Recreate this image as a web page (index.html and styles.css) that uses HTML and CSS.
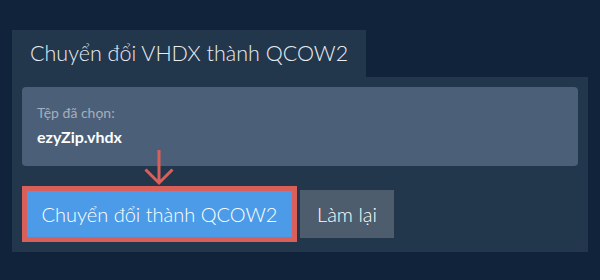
FILE: index.html
```html
<!DOCTYPE html>
<html lang="vi">
<head>
    <meta charset="UTF-8">
    <meta name="viewport" content="width=device-width, initial-scale=1.0">
    <title>Chuyển đổi VHDX thành QCOW2</title>
    <link rel="stylesheet" href="styles.css">
</head>
<body>
    <div class="converter">
        <div class="tab">Chuyển đổi VHDX thành QCOW2</div>
        <div class="panel">
            <div class="file-box">
                <div class="file-label">Tệp đã chọn:</div>
                <div class="file-name">ezyZip.vhdx</div>
            </div>
            <svg class="pointer" width="30" height="38" viewBox="0 0 30 38">
                <path d="M15 1 V34 M1.5 20.5 L15 34 L28.5 20.5" fill="none" stroke="#d9605a" stroke-width="3"/>
            </svg>
            <div class="actions">
                <button class="convert">Chuyển đổi thành QCOW2</button>
                <button class="reset">Làm lại</button>
            </div>
        </div>
    </div>
</body>
</html>
```

FILE: styles.css
```css
body {
    font-family: Lato, "Open Sans", sans-serif;
    background-color: #11233a;
    margin: 0px;
    padding: 30px 12px;
}
.converter {
    width: 576px;
}
.tab {
    display: inline-block;
    background-color: #22364c;
    color: #e8edf2;
    font-size: 21.5px;
    font-weight: 300;
    height: 47px;
    line-height: 47px;
    padding: 0 18px;
    box-sizing: border-box;
}
.panel {
    position: relative;
    background-color: #22364c;
    padding: 10px 10px 10px 10px;
}
.file-box {
    background-color: #4b6078;
    border-radius: 4px;
    padding: 17px 15px 0 15px;
    height: 79px;
    box-sizing: border-box;
}
.file-label {
    color: #a3afbd;
    font-size: 14px;
    margin-bottom: 6px;
}
.file-name {
    color: #ffffff;
    font-size: 16px;
    font-weight: bold;
}
.pointer {
    position: absolute;
    left: 132px;
    top: 72px;
}
.actions {
    display: flex;
    align-items: center;
    margin-top: 20px;
}
.actions button {
    font-family: Lato, "Open Sans", sans-serif;
    color: #ffffff;
    border: none;
    cursor: pointer;
    font-size: 20px;
    font-weight: 300;
    padding: 0;
}
.convert {
    background-color: #4c9be8;
    border: 5px solid #d9605a !important;
    height: 56px;
    width: 275px;
}
.reset {
    background-color: #4d5d6e;
    height: 48px;
    width: 94px;
    margin-left: 3px;
}
```
